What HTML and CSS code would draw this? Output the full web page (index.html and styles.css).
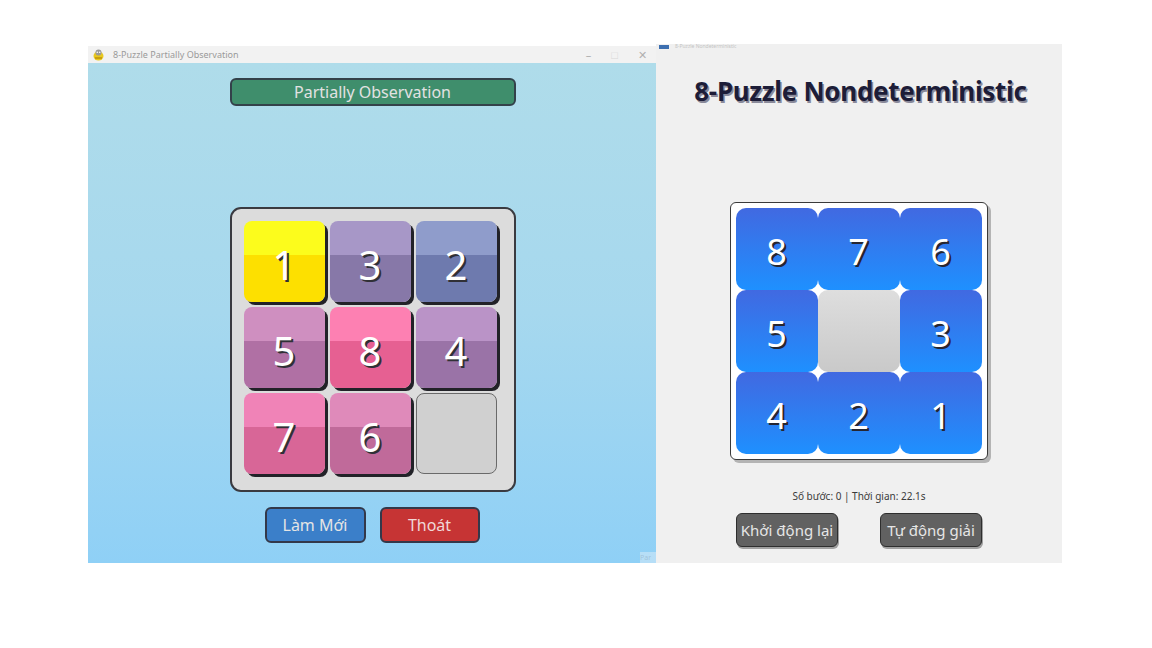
FILE: index.html
```html
<!DOCTYPE html>
<html>
<head>
<meta charset="utf-8">
<link rel="stylesheet" href="styles.css">
</head>
<body>
<div class="desktop">
  <div class="win win-left">
    <div class="titlebar">
      <svg class="app-icon" width="11" height="12" viewBox="0 0 11 12">
        <ellipse cx="5.5" cy="7" rx="5" ry="4.5" fill="#e8c820"/>
        <circle cx="5.5" cy="3.5" r="3" fill="#9a9a9a"/>
        <circle cx="4.3" cy="3.2" r="0.8" fill="#fff"/>
        <circle cx="6.7" cy="3.2" r="0.8" fill="#fff"/>
        <rect x="2" y="8" width="7" height="2" fill="#c9a010"/>
      </svg>
      <span class="win-title">8-Puzzle Partially Observation</span>
      <div class="controls">
        <span class="ctl">&#8211;</span>
        <span class="ctl ctl-max">&#9633;</span>
        <span class="ctl">&#10005;</span>
      </div>
    </div>
    <div class="content-left">
      <div class="hdr-btn">Partially Observation</div>
      <div class="board">
        <div class="tile t1"><span>1</span></div>
        <div class="tile t3"><span>3</span></div>
        <div class="tile t2"><span>2</span></div>
        <div class="tile t5"><span>5</span></div>
        <div class="tile t8"><span>8</span></div>
        <div class="tile t4"><span>4</span></div>
        <div class="tile t7"><span>7</span></div>
        <div class="tile t6"><span>6</span></div>
        <div class="tile empty"></div>
      </div>
      <div class="btn-row">
        <div class="btn btn-blue">Làm Mới</div>
        <div class="btn btn-red">Thoát</div>
      </div>
      <div class="grip">Par</div>
    </div>
  </div>
  <div class="win win-right">
    <div class="r-titlebar">
      <span class="r-icon"></span>
      <span class="r-title">8-Puzzle Nondeterministic</span>
    </div>
    <div class="content-right">
      <h1 class="r-heading">8-Puzzle Nondeterministic</h1>
      <div class="r-board">
        <div class="b-tile">8</div>
        <div class="b-tile">7</div>
        <div class="b-tile">6</div>
        <div class="b-tile">5</div>
        <div class="b-tile b-empty"></div>
        <div class="b-tile">3</div>
        <div class="b-tile">4</div>
        <div class="b-tile">2</div>
        <div class="b-tile">1</div>
      </div>
      <div class="info">Số bước: 0 | Thời gian: 22.1s</div>
      <div class="r-btn-row">
        <div class="g-btn">Khởi động lại</div>
        <div class="g-btn">Tự động giải</div>
      </div>
    </div>
  </div>
</div>
</body>
</html>
```

FILE: styles.css
```css
* { box-sizing: border-box; }
html, body {
  margin: 0;
  padding: 0;
  background: #ffffff;
  width: 1152px;
  height: 648px;
  overflow: hidden;
  font-family: "Noto Sans", "Open Sans", sans-serif;
}
.desktop {
  display: flex;
  align-items: flex-start;
  padding: 44px 0 0 88px;
}
.win-left {
  width: 568px;
  margin-top: 2px;
  display: flex;
  flex-direction: column;
}
.titlebar {
  height: 17px;
  background: #f2f2f2;
  display: flex;
  align-items: center;
  padding-left: 5px;
}
.app-icon { flex: none; }
.win-title {
  margin-left: 9px;
  font-size: 9px;
  color: #9a9a9a;
}
.controls {
  margin-left: auto;
  display: flex;
  gap: 20px;
  padding-right: 9px;
  color: #b0b0b0;
  font-size: 11px;
}
.ctl-max { color: #d8d8d8; }
.content-left {
  position: relative;
  height: 500px;
  background: linear-gradient(to bottom, #afdcea 0%, #a6d8ee 50%, #8fd0f6 100%);
  display: flex;
  flex-direction: column;
  align-items: center;
  padding-top: 15px;
}
.hdr-btn {
  width: 286px;
  height: 28px;
  margin-left: 1px;
  background: #3f8e6c;
  border: 2px solid #33414a;
  border-radius: 6px;
  color: #e2e2e2;
  font-size: 16px;
  display: flex;
  align-items: center;
  justify-content: center;
}
.board {
  margin-top: 101px;
  margin-left: 1px;
  width: 286px;
  height: 285px;
  background: #dcdcdc;
  border: 2px solid #3a3a40;
  border-radius: 11px;
  padding: 12px 16px 16px 12px;
  display: grid;
  grid-template-columns: repeat(3, 81px);
  grid-template-rows: repeat(3, 81px);
  gap: 5px;
}
.tile {
  border-radius: 8px;
  box-shadow: 3px 3px 0 #222228;
  display: flex;
  align-items: center;
  justify-content: center;
  color: #ffffff;
  font-size: 40px;
  text-shadow: 2px 2px 0 #303036;
  background: linear-gradient(to bottom, var(--top) 0, var(--top) 42%, var(--bot) 42%, var(--bot) 100%);
}
.tile span { margin-top: 6px; }
.t1 { --top: #fcfc1c; --bot: #fde000; }
.t3 { --top: #a797c7; --bot: #8778a8; }
.t2 { --top: #8f9ccb; --bot: #6e7aae; }
.t5 { --top: #cf8fc0; --bot: #b070a4; }
.t8 { --top: #fd80b2; --bot: #e66092; }
.t4 { --top: #ba93c7; --bot: #9a73a7; }
.t7 { --top: #f083b7; --bot: #d86697; }
.t6 { --top: #df8aba; --bot: #c06a9a; }
.tile.empty {
  background: #d0d0d0;
  border: 1.5px solid #6a6a6a;
  box-shadow: none;
}
.btn-row {
  margin-top: 15px;
  display: flex;
  gap: 14px;
}
.btn {
  width: 100px;
  height: 36px;
  border: 2px solid #33384a;
  border-radius: 6px;
  color: #e4e4e4;
  font-size: 16px;
  display: flex;
  align-items: center;
  justify-content: center;
}
.btn-blue { background: #3b7fc9; width: 101px; }
.btn-red { background: #c63434; color: #f0d8d8; }
.grip {
  position: absolute;
  right: 0;
  bottom: 0;
  width: 16px;
  height: 11px;
  background: rgba(230, 240, 248, 0.45);
  color: rgba(120, 140, 160, 0.35);
  font-size: 7px;
  line-height: 11px;
  overflow: hidden;
}
.win-right {
  width: 406px;
  height: 519px;
  background: #f0f0f0;
  display: flex;
  flex-direction: column;
}
.r-titlebar {
  height: 5px;
  display: flex;
  align-items: center;
  padding-left: 3px;
}
.r-icon {
  width: 10px;
  height: 4px;
  background: #3d6fb0;
}
.r-title {
  margin-left: 6px;
  font-size: 5px;
  line-height: 5px;
  color: #c4c4c4;
}
.content-right {
  display: flex;
  flex-direction: column;
  align-items: center;
}
.r-heading {
  margin: 25px 0 0 3px;
  font-size: 26px;
  line-height: 34px;
  font-weight: 700;
  color: #1d1d38;
  text-shadow: 1.5px 1.5px 0 #8a8a9a;
  letter-spacing: -0.3px;
}
.r-board {
  margin-top: 94px;
  width: 258px;
  height: 258px;
  background: #ffffff;
  border: 1.5px solid #3a3a3a;
  border-radius: 6px;
  box-shadow: 3px 3px 0 #b4b4b4;
  padding: 4.5px;
  display: grid;
  grid-template-columns: repeat(3, 82px);
  grid-template-rows: repeat(3, 82px);
}
.b-tile {
  border-radius: 10px;
  background: linear-gradient(to bottom, #4169e1, #1e90ff);
  color: #ffffff;
  font-size: 36px;
  text-shadow: 2px 2px 0 #262630;
  display: flex;
  align-items: center;
  justify-content: center;
  padding-top: 6px;
}
.b-tile.b-empty {
  background: linear-gradient(to bottom, #dedede, #c9c9c9);
}
.info {
  margin-top: 29px;
  font-size: 10px;
  color: #3a3a3a;
}
.r-btn-row {
  margin-top: 10px;
  display: flex;
  gap: 42px;
}
.g-btn {
  width: 102px;
  height: 34px;
  background: #616161;
  border: 1.5px solid #2e2e2e;
  border-radius: 6px;
  box-shadow: 1px 2px 0 #a0a0a0;
  color: #e6e6e6;
  font-size: 15px;
  display: flex;
  align-items: center;
  justify-content: center;
}
```
